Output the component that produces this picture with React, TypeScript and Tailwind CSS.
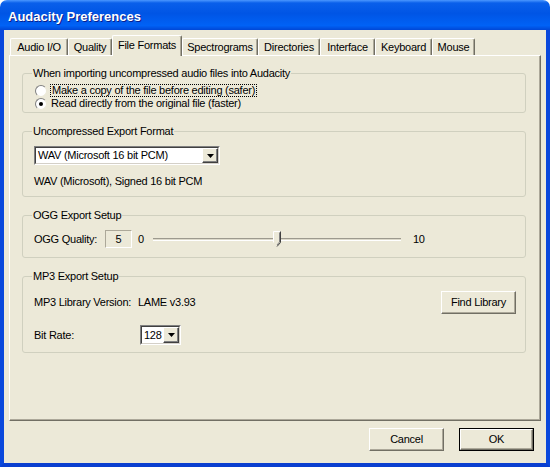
import React from "react";

function Arrow() {
  return (
    <svg width="7" height="4" viewBox="0 0 7 4">
      <polygon points="0,0 7,0 3.5,4" fill="#000" />
    </svg>
  );
}

function Combo({ box, text }: { box: string; text: string }) {
  return (
    <div
      className={`flex bg-white border-t border-l border-t-[#808080] border-l-[#808080] border-b border-r border-b-white border-r-white ${box}`}
    >
      <div className="flex flex-1 border-t border-l border-t-[#404040] border-l-[#404040] border-b border-r border-b-[#D4D0C8] border-r-[#D4D0C8]">
        <div className="flex-1 flex items-center pl-[2px] whitespace-nowrap overflow-hidden">{text}</div>
        <div className="w-[16px] flex items-center justify-center bg-[#ECE9D8] border-t border-l border-t-white border-l-white border-b border-r border-b-[#404040] border-r-[#404040] shadow-[inset_-1px_-1px_#808080]">
          <Arrow />
        </div>
      </div>
    </div>
  );
}

function Button({ label, def }: { label: string; def?: boolean }) {
  const inner = (
    <div className="flex-1 flex items-center justify-center bg-[#ECE9D8] border-t border-l border-t-white border-l-white border-b border-r border-b-[#716F64] border-r-[#716F64] shadow-[inset_-1px_-1px_#ACA899]">
      {label}
    </div>
  );
  if (def) {
    return <div className="w-[75px] h-[23px] flex border border-black">{inner}</div>;
  }
  return <div className="w-[75px] h-[23px] flex">{inner}</div>;
}

function Radio({ checked }: { checked?: boolean }) {
  return (
    <div className="w-[12px] h-[12px] rounded-full bg-white border border-t-[#808080] border-l-[#808080] border-b-[#ECE9D8] border-r-[#ECE9D8] flex items-center justify-center shrink-0">
      {checked ? <div className="w-[4px] h-[4px] rounded-full bg-black" /> : null}
    </div>
  );
}

function Thumb() {
  return (
    <svg width="8" height="16" viewBox="0 0 8 16">
      <polygon points="0.5,0.5 7.5,0.5 7.5,11.5 4,15.5 0.5,11.5" fill="#ECE9D8" />
      <polyline points="0.5,11.5 0.5,0.5 7.5,0.5" fill="none" stroke="#ffffff" />
      <polyline points="7.5,0.5 7.5,11.5 4,15.5" fill="none" stroke="#404040" />
      <polyline points="6.5,1.5 6.5,11 4,14" fill="none" stroke="#808080" />
    </svg>
  );
}

const tabs = [
  { label: "Audio I/O", w: "w-[58px]" },
  { label: "Quality", w: "w-[44px]" },
  { label: "File Formats", w: "w-[70px]", sel: true },
  { label: "Spectrograms", w: "w-[76px]" },
  { label: "Directories", w: "w-[62px]" },
  { label: "Interface", w: "w-[55px]" },
  { label: "Keyboard", w: "w-[57px]" },
  { label: "Mouse", w: "w-[43px]" },
];

export default function App() {
  return (
    <div className="w-[550px] h-[467px] flex flex-col text-[11px] leading-[13px] tracking-[-0.25px] text-black font-['Liberation_Sans',Arial,sans-serif]">
      {/* Title bar */}
      <div className="h-[30px] shrink-0 rounded-t-[7px] bg-[linear-gradient(to_bottom,#4b97ff_0%,#0a5fea_10%,#0055e5_45%,#0062f6_85%,#0047d6_100%)] flex items-center pl-[8px] pt-[2px]">
        <span className="text-white font-bold text-[13px] leading-[15px] tracking-normal [text-shadow:1px_1px_#0a1e8c]">
          Audacity Preferences
        </span>
      </div>

      {/* Body */}
      <div className="flex-1 flex flex-col bg-[#ECE9D8] border-l-4 border-r-4 border-b-4 border-l-[#0a48dc] border-r-[#0a48dc] border-b-[#0a3fd0] pt-[5px] px-[5px]">
        {/* Tabs */}
        <div className="h-[20px] flex items-end pl-[1px] shrink-0">
          {tabs.map((t) =>
            t.sel ? (
              <div
                key={t.label}
                className={`${t.w} h-[21px] mb-[-1px] relative z-10 bg-[#ECE9D8] flex items-center justify-center pb-[2px] border-t border-l border-t-white border-l-white border-r border-r-[#716F64] rounded-t-[2px] shadow-[inset_-1px_0_#ACA899]`}
              >
                {t.label}
              </div>
            ) : (
              <div
                key={t.label}
                className={`${t.w} h-[17px] bg-[#ECE9D8] flex items-center justify-center border-t border-l border-t-white border-l-white border-r border-r-[#716F64] rounded-t-[2px] shadow-[inset_-1px_0_#ACA899]`}
              >
                {t.label}
              </div>
            )
          )}
        </div>

        {/* Panel */}
        <div className="h-[366px] shrink-0 flex flex-col pt-[11px] pl-[12px] border-t border-l border-t-white border-l-white border-r border-b border-r-[#716F64] border-b-[#716F64] shadow-[inset_-1px_-1px_#ACA899]">
          {/* Group 1 */}
          <fieldset className="w-[504px] border border-[#D0D0BF] rounded-[3px] p-0">
            <legend className="ml-[9px] px-[1px] leading-[13px]">
              When importing uncompressed audio files into Audacity
            </legend>
            <div className="pl-[12px] pt-[4px] pb-[2px]">
              <div className="flex items-center h-[13px] gap-[3px]">
                <Radio />
                <span className="border border-dotted border-black px-[1px] leading-[11px]">
                  Make a copy of the file before editing (safer)
                </span>
              </div>
              <div className="flex items-center h-[13px] gap-[4px]">
                <Radio checked />
                <span>Read directly from the original file (faster)</span>
              </div>
            </div>
          </fieldset>

          {/* Group 2 */}
          <fieldset className="w-[504px] mt-[12px] border border-[#D0D0BF] rounded-[3px] p-0">
            <legend className="ml-[9px] px-[1px] leading-[13px]">Uncompressed Export Format</legend>
            <div className="pl-[11px] pt-[8px] pb-[8px]">
              <Combo box="w-[186px] h-[19px]" text="WAV (Microsoft 16 bit PCM)" />
              <div className="mt-[10px] h-[13px]">WAV (Microsoft), Signed 16 bit PCM</div>
            </div>
          </fieldset>

          {/* Group 3 */}
          <fieldset className="w-[504px] mt-[12px] border border-[#D0D0BF] rounded-[3px] p-0">
            <legend className="ml-[9px] px-[1px] leading-[13px]">OGG Export Setup</legend>
            <div className="flex items-center h-[18px] ml-[11px] mt-[8px] mb-[9px]">
              <span className="w-[71px]">OGG Quality:</span>
              <div className="w-[27px] h-[18px] flex items-center justify-center border-t border-l border-t-[#ACA899] border-l-[#ACA899] border-b border-r border-b-white border-r-white">
                5
              </div>
              <span className="ml-[6px] w-[8px]">0</span>
              <div className="relative w-[262px] h-[18px] flex items-center px-[7px]">
                <div className="w-full h-[3px] border-t border-t-[#9D9A8E] bg-[#DCD9CA] border-b border-b-white" />
                <div className="absolute left-[127px] top-[1px]">
                  <Thumb />
                </div>
              </div>
              <span className="ml-[5px]">10</span>
            </div>
          </fieldset>

          {/* Group 4 */}
          <fieldset className="w-[504px] mt-[12px] border border-[#D0D0BF] rounded-[3px] p-0">
            <legend className="ml-[9px] px-[1px] leading-[13px]">MP3 Export Setup</legend>
            <div className="pl-[11px] pr-[9px] pt-[8px] pb-[7px]">
              <div className="flex items-center h-[23px]">
                <span className="w-[104px]">MP3 Library Version:</span>
                <span className="flex-1">LAME v3.93</span>
                <Button label="Find Library" />
              </div>
              <div className="flex items-center h-[20px] mt-[11px]">
                <span className="w-[106px]">Bit Rate:</span>
                <Combo box="w-[41px] h-[20px]" text="128" />
              </div>
            </div>
          </fieldset>
        </div>

        {/* Bottom buttons */}
        <div className="flex justify-end gap-[15px] mt-[7px] pr-[7px]">
          <Button label="Cancel" />
          <Button label="OK" def />
        </div>
      </div>
    </div>
  );
}
